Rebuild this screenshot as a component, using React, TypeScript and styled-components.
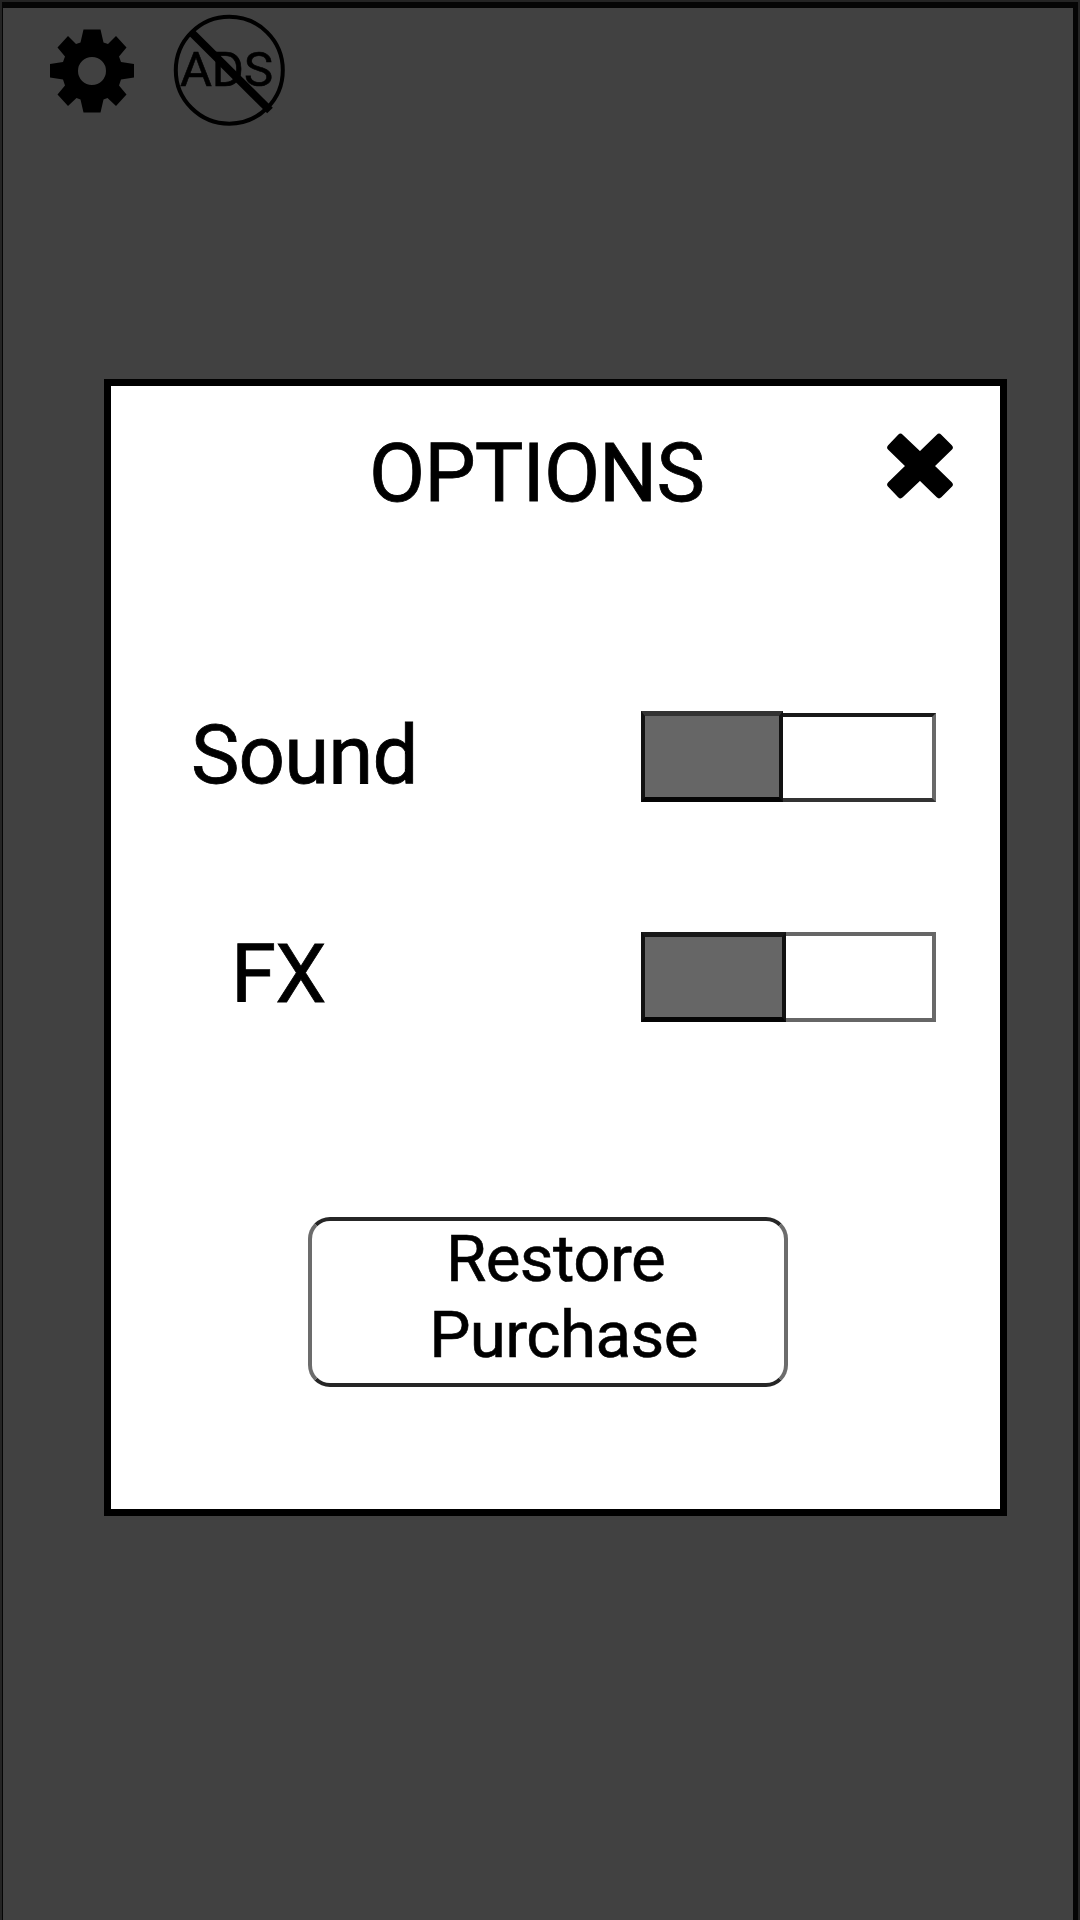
import React from 'react';
import styled, { createGlobalStyle } from 'styled-components';

const GlobalStyle = createGlobalStyle`
  *, *::before, *::after { box-sizing: border-box; }
  body { margin: 0; background: #414141; }
`;

const Screen = styled.main`
  display: flex;
  flex-direction: column;
  width: 1080px;
  height: 1920px;
  overflow: hidden;
  padding: 2px 2px 0 2px;
  background: #242424;
  color: #000;
  font-family: Roboto, 'Liberation Sans', sans-serif;
`;

const Backdrop = styled.div`
  display: flex;
  flex-direction: column;
  align-items: flex-start;
  flex: 1;
  border: solid #050505;
  border-width: 6px 5px 0 1px;
  background: #414141;
`;

const Toolbar = styled.header`
  display: flex;
  align-items: flex-start;
  height: 371px;
  padding: 6px 0 0 47px;
`;

const IconButton = styled.button<{ $top?: number; $right?: number }>`
  display: block;
  flex: none;
  margin: ${(p) => p.$top ?? 0}px ${(p) => p.$right ?? 0}px 0 0;
  padding: 0;
  border: 0;
  background: none;
  color: #000;

  svg { display: block; }
`;

const NoAds = styled.div`
  position: relative;
  display: flex;
  align-items: center;
  justify-content: center;
  width: 112px;
  height: 112px;

  svg { position: absolute; inset: 0; }
`;

const AdsText = styled.span`
  margin: 0 5px 0 0;
  font-size: 49px;
  line-height: 56px;
  -webkit-text-stroke: 0.6px #000;
`;

const Dialog = styled.section`
  width: 903px;
  height: 1137px;
  margin-left: 101px;
  border: 7px solid #000;
  background: #fff;
`;

const DialogHeader = styled.div`
  display: flex;
  align-items: flex-start;
  justify-content: space-between;
  height: 325px;
  padding: 39px 46px 0 258px;
`;

const Title = styled.h1`
  margin: 0;
  font-size: 81.6px;
  font-weight: 400;
  line-height: 96px;
  letter-spacing: -0.9px;
  white-space: nowrap;
  -webkit-text-stroke: 0.8px #000;
`;

const OptionRow = styled.div<{ $indent: number; $height: number }>`
  display: flex;
  align-items: flex-start;
  justify-content: space-between;
  height: ${(p) => p.$height}px;
  padding: 0 64px 0 ${(p) => p.$indent}px;
`;

const Label = styled.span<{ $shift?: number }>`
  margin-top: ${(p) => p.$shift ?? 0}px;
  font-size: 81.6px;
  line-height: 96px;
  letter-spacing: -0.9px;
  white-space: nowrap;
  -webkit-text-stroke: 0.8px #000;
`;

const Track = styled.div<{ $edge: string; $base: string; $raised?: boolean }>`
  display: flex;
  width: 295px;
  height: ${(p) => (p.$raised ? 91 : 90)}px;
  align-items: flex-end;

  &::after {
    content: '';
    flex: 1;
    height: ${(p) => (p.$raised ? 89 : 90)}px;
    border: solid;
    border-width: 4px 4px 4px 0;
    border-color: ${(p) => `${p.$edge} #696969 ${p.$base}`};
  }
`;

const Fill = styled.div<{ $width: number; $top: string }>`
  width: ${(p) => p.$width}px;
  height: 100%;
  border: 4px solid #111;
  border-top: 5px solid ${(p) => p.$top};
  border-bottom: 5px solid #050505;
  background: #666;
`;

const RestoreButton = styled.button`
  display: flex;
  flex-direction: column;
  align-items: center;
  justify-content: center;
  width: 480px;
  height: 170px;
  margin-left: 197px;
  padding: 0 0 10px 15px;
  border: 4px solid;
  border-color: #262626 #6c6c6c;
  border-radius: 22px;
  background: #fff;
  color: #000;
  font: 400 65.5px/76px Roboto, 'Liberation Sans', sans-serif;
  letter-spacing: -0.6px;
  -webkit-text-stroke: 0.6px #000;
`;

const ButtonLine = styled.span<{ $indent?: number }>`
  flex: none;
  padding-left: ${(p) => p.$indent ?? 0}px;
`;

const GearIcon = () => (
  <svg width="84" height="84" viewBox="50 29.5 84 84" fill="currentColor">
    <path
      fillRule="evenodd"
      d="M83.5 30H100.5L103.500 43L108 44.500L116 36.500L126.500 48L119 57L121 62.500L134 64.500V78L121 80L119 86L126.500 95L116 106.500L107.500 98.500L103.500 100L100.500 113H83.500L80.500 100L76.500 98.500L68 106.500L57.500 95L65 86L63 80L50 78V64.500L63 62.500L65 57L57.500 48L68 36.500L76 44.500L80.500 43ZM92 57.500a14 14 0 1 0 0 28a14 14 0 1 0 0 -28Z"
    />
  </svg>
);

const BanIcon = () => (
  <svg width="112" height="112" viewBox="173 14 112 112" fill="none" stroke="currentColor">
    <circle cx="229.300" cy="70.200" r="53.500" strokeWidth="4" />
    <path d="M190.500 31.500L270 110.500" strokeWidth="8" />
  </svg>
);

const CloseIcon = () => (
  <svg width="68" height="68" viewBox="886 432 68 68" fill="currentColor">
    <path
      d="M900.500 437L920 455.500L939 437L949.500 447.500L930.500 466L949.500 484.500L939 495L920 476.500L900.500 495L890.500 484.500L909.500 466L890.500 447.500Z"
      stroke="currentColor"
      strokeWidth="6.500"
      strokeLinejoin="round"
    />
  </svg>
);

export default function App() {
  return (
    <>
      <GlobalStyle />
      <Screen>
        <Backdrop>
          <Toolbar>
            <IconButton $top={15} $right={39} aria-label="Settings">
              <GearIcon />
            </IconButton>
            <NoAds>
              <AdsText>ADS</AdsText>
              <BanIcon />
            </NoAds>
          </Toolbar>
          <Dialog>
            <DialogHeader>
              <Title>OPTIONS</Title>
              <IconButton $top={7} aria-label="Close">
                <CloseIcon />
              </IconButton>
            </DialogHeader>
            <OptionRow $indent={80} $height={221}>
              <Label $shift={-4}>Sound</Label>
              <Track $edge="#191919" $base="#333" $raised>
                <Fill $width={142} $top="#333" />
              </Track>
            </OptionRow>
            <OptionRow $indent={120} $height={285}>
              <Label $shift={-6}>FX</Label>
              <Track $edge="#666" $base="#666">
                <Fill $width={145} $top="#191919" />
              </Track>
            </OptionRow>
            <RestoreButton>
              <ButtonLine>Restore</ButtonLine>
              <ButtonLine $indent={16}>Purchase</ButtonLine>
            </RestoreButton>
          </Dialog>
        </Backdrop>
      </Screen>
    </>
  );
}
